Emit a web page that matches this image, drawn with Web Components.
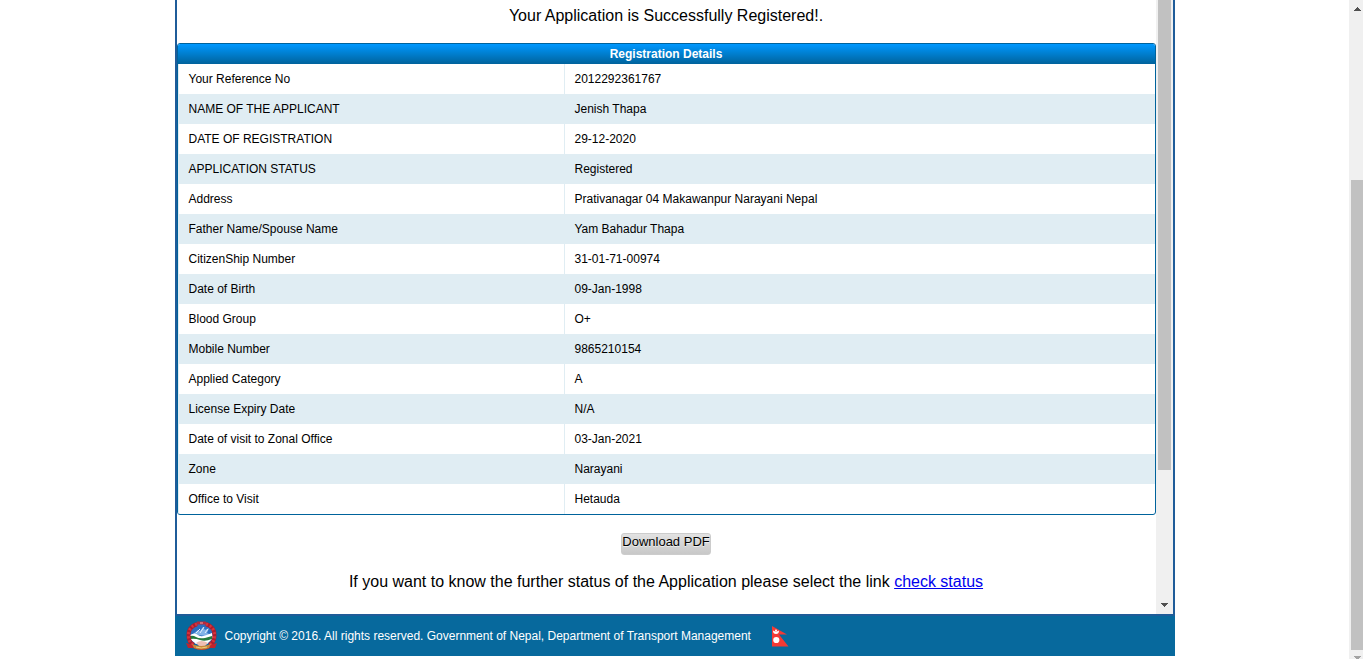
<!DOCTYPE html>
<html lang="en">
<head>
<meta charset="utf-8">
<title>Registration Details</title>
<style>
html, body { margin: 0; height: 100%; background: #fff; }
body { font-family: "Liberation Sans", Arial, sans-serif; font-size: 16px; color: #000; }
</style>
</head>
<body>
<license-page></license-page>

<template id="t-page">
<style>
:host { display: flex; min-height: 100vh; }
main { flex: 1; min-width: 0; display: flex; flex-direction: column; }
.wrap { width: 100%; max-width: 1000px; margin: 0 auto; display: flex; flex-direction: column; box-sizing: border-box; }
.frame { display: flex; border: 2px solid #1f5c99; border-top: 0; }
.content { flex: 1; min-width: 0; text-align: center; }
p { margin: 0; line-height: 20px; }
.done { padding: 6px 0 17px; }
.more { padding: 17px 0 22px; }
.action { padding-top: 18px; display: flex; justify-content: center; }
a { color: #0000ee; }
</style>
<main>
  <div class="wrap">
    <div class="frame">
      <div class="content">
        <p class="done">Your Application is Successfully Registered!.</p>
        <details-table heading="Registration Details"></details-table>
        <div class="action"><soft-button>Download PDF</soft-button></div>
        <p class="more">If you want to know the further status of the Application please select the link <a href="#status">check status</a></p>
      </div>
      <scroll-track></scroll-track>
    </div>
    <site-footer>Copyright © 2016. All rights reserved. Government of Nepal, Department of Transport Management</site-footer>
  </div>
</main>
<scroll-track up></scroll-track>
</template>

<template id="t-table">
<style>
:host { display: block; border: 1px solid #00639c; border-radius: 3px; overflow: hidden; }
table { width: 100%; border-collapse: separate; border-spacing: 0; table-layout: fixed; font-size: 12px; text-align: left; }
caption { height: 20px; line-height: 20px; font-weight: bold; color: #fff; text-align: center; background: linear-gradient(#0098ff, #00639c); }
th, td { height: 30px; padding: 0 10px; font-weight: normal; box-sizing: border-box; line-height: 16px; border-left: 1px solid #e0edf3; }
th { width: 386px; }
tr:nth-child(even) { background: #e0edf3; }
</style>
<table><caption></caption><tbody></tbody></table>
</template>

<template id="t-button">
<style>
:host { display: block; }
button { display: block; width: 90px; height: 22px; padding: 0 0 4px; margin: 0; border: 1px solid #ccc; border-radius: 3px; background: linear-gradient(#e2e2e2, #c8c8c8); font: 13px/16px "Liberation Sans", Arial, sans-serif; color: #000; white-space: nowrap; text-shadow: 0 1px 0 #eee; }
</style>
<button type="button"><slot></slot></button>
</template>

<template id="t-footer">
<style>
:host { display: flex; align-items: center; height: 40px; padding-left: 10px; background: #07699d; color: #fff; font-size: 12px; }
.text { flex: 0 0 536px; margin: 0 10px 0 7px; }
svg { display: block; flex: none; }
</style>
<svg width="33" height="30" viewBox="0 0 33 30" aria-hidden="true">
  <ellipse cx="16.500" cy="13.500" rx="12.500" ry="11" fill="#2c6fc0"/>
  <path d="M8 13l5-4 2 1 3-4 2 3 4-2-2 5 4 2-6 1z" fill="#82b2e6"/>
  <path d="M11 12l4-4M15 12l4-6M20 12l3-4" stroke="#e5f0fb" stroke-width="1"/>
  <path d="M5 14q5-3 8 0t14-2l1 5-6 6H11l-6-5z" fill="#fff"/>
  <path d="M5 15q3-1 6 1t9 1l7-2v3q-7 3-12 1T5 18z" fill="#237a3d"/>
  <path d="M11 22q5-4 12 0l-3 3h-6z" fill="#eebfb4"/>
  <path d="M12 3Q3.500 6 3.500 14T9 24M21 3Q29.500 6 29.500 14T24 24" fill="none" stroke="#a81e2f" stroke-width="4"/>
  <path d="M12 3Q3.500 6 3.500 14T9 24M21 3Q29.500 6 29.500 14T24 24" fill="none" stroke="#d8323a" stroke-width="3" stroke-dasharray="2 2"/>
  <path d="M12 2h9" stroke="#b8293a" stroke-width="3"/><path d="M15 2h3" stroke="#e9a9ac" stroke-width="1"/>
  <path d="M1 22l6 2q9 5 19 0l6-2-2 5-5 0q-8 4-17 0l-5 0z" fill="#c0242c"/>
  <path d="M7 23q9 4 19 0l-2 4q-8 3-15 0z" fill="#c8873a"/>
  <path d="M11 26q5 2 11 0" fill="none" stroke="#eed07c"/>
</svg>
<span class="text"><slot></slot></span>
<svg width="18" height="22" viewBox="0 0 18 22" aria-hidden="true">
  <path d="M1 1l15 8.500H8L17.500 21.500H1z" fill="#f43a35"/>
  <path d="M2 5.500q3 2 6 0 0 3.500-3 3.500t-3-3.500z" fill="#fff"/><circle cx="5" cy="5.500" r="1" fill="#fff"/>
  <circle cx="5.300" cy="15" r="3.100" fill="#fff"/>
</svg>
</template>

<template id="t-track">
<style>
:host { display: flex; flex-direction: column; flex: none; width: 17px; background: #f0f0f0; align-items: center; }
:host([up]) { width: 14px; overflow: hidden; align-items: flex-start; }
.thumb { width: 13px; height: 470px; background: #c1c1c1; }
:host([up]) .thumb { flex: 1; margin: 0 0 0 2px; height: auto; }
.gap { flex: 1; }
:host([up]) .gap { flex: 0 0 180px; box-sizing: border-box; padding: 7px 0 0 5px; }
.end { height: 17px; box-sizing: border-box; padding-top: 6px; }
:host([up]) .end { height: 9px; padding-left: 5px; overflow: hidden; }
svg { display: block; }
</style>
</template>

<script>
const mount = (host, id) => {
  const root = host.attachShadow({ mode: "open" });
  root.append(document.getElementById(id).content.cloneNode(true));
  return root;
};
const rows = [
  ["Your Reference No", "2012292361767"],
  ["NAME OF THE APPLICANT", "Jenish Thapa"],
  ["DATE OF REGISTRATION", "29-12-2020"],
  ["APPLICATION STATUS", "Registered"],
  ["Address", "Prativanagar 04 Makawanpur Narayani Nepal"],
  ["Father Name/Spouse Name", "Yam Bahadur Thapa"],
  ["CitizenShip Number", "31-01-71-00974"],
  ["Date of Birth", "09-Jan-1998"],
  ["Blood Group", "O+"],
  ["Mobile Number", "9865210154"],
  ["Applied Category", "A"],
  ["License Expiry Date", "N/A"],
  ["Date of visit to Zonal Office", "03-Jan-2021"],
  ["Zone", "Narayani"],
  ["Office to Visit", "Hetauda"]
];
customElements.define("details-table", class extends HTMLElement {
  constructor() {
    super();
    const root = mount(this, "t-table");
    root.querySelector("tbody").innerHTML = rows.map(([k, v]) =>
      `<tr><th scope="row">${k}</th><td>${v}</td></tr>`).join("");
  }
  connectedCallback() {
    this.shadowRoot.querySelector("caption").textContent = this.getAttribute("heading");
  }
});
customElements.define("soft-button", class extends HTMLElement {
  constructor() { super(); mount(this, "t-button"); }
});
customElements.define("site-footer", class extends HTMLElement {
  constructor() { super(); mount(this, "t-footer"); }
});
customElements.define("scroll-track", class extends HTMLElement {
  constructor() { super(); mount(this, "t-track"); }
  connectedCallback() {
    const up = `<svg width="7" height="4" shape-rendering="crispEdges"><path d="M3 0h1v1h1v1h1v1h1v1H0V3h1V2h1V1h1z" fill="#505050"/></svg>`;
    const down = c => `<svg width="7" height="4" shape-rendering="crispEdges"><path d="M0 0h7v1H6v1H5v1H4v1H3V3H2V2H1V1H0z" fill="${c}"/></svg>`;
    const outer = this.hasAttribute("up");
    const box = document.createElement("template");
    box.innerHTML = outer
      ? `<div class="gap">${up}</div><div class="thumb"></div><div class="end">${down("#a3a3a3")}</div>`
      : `<div class="thumb"></div><div class="gap"></div><div class="end">${down("#505050")}</div>`;
    this.shadowRoot.append(box.content);
  }
});
customElements.define("license-page", class extends HTMLElement {
  constructor() { super(); mount(this, "t-page"); }
});
</script>
</body>
</html>
